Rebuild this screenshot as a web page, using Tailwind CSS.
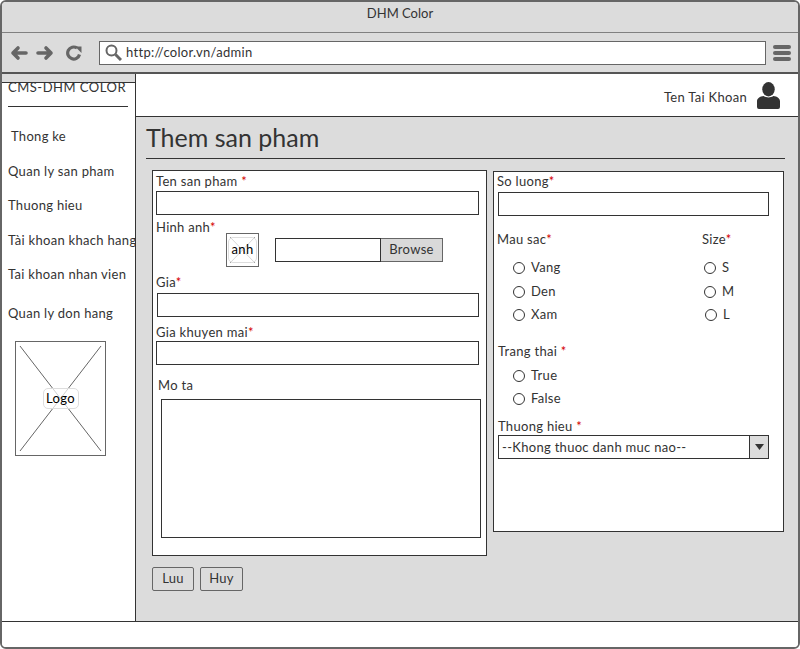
<!DOCTYPE html>
<html lang="en">
<head>
    <meta charset="UTF-8">
    <title>DHM Color</title>
    <script src="https://cdn.jsdelivr.net/npm/@tailwindcss/browser@4"></script>
</head>
<body class="bg-white">
    <div class="w-[800px] h-[649px] overflow-hidden flex flex-col bg-white border-2 border-[#666] rounded-[6px] font-['Lato',sans-serif] text-[13px] tracking-[0.3px] text-[#333]">
        <!-- title bar -->
        <div class="h-[31px] shrink-0 bg-[#dcdcdc] border-b border-[#808080] flex justify-center pt-[2px] leading-[18px] tracking-normal">DHM Color</div>
        <!-- address bar -->
        <div class="h-[41px] shrink-0 bg-[#dcdcdc] border-b-2 border-[#555] flex items-center pl-[8px] pr-[7px]">
            <svg class="w-[18px] h-[16px]" viewBox="0 0 18 16" fill="none" stroke="#666" stroke-width="3.6" stroke-linecap="round" stroke-linejoin="round"><path d="M16 8H3M8 3L3 8l5 5"/></svg>
            <svg class="w-[18px] h-[16px] ml-[8px]" viewBox="0 0 18 16" fill="none" stroke="#666" stroke-width="3.6" stroke-linecap="round" stroke-linejoin="round"><path d="M2 8h13M10 3l5 5-5 5"/></svg>
            <svg class="w-[16px] h-[16px] ml-[12px]" viewBox="0 0 16 16" fill="none"><path d="M13.500 9.500A6 6 0 1 1 11 3" stroke="#666" stroke-width="3.200"/><path d="M9 1.500h6.500V8z" fill="#666"/></svg>
            <div class="ml-[17px] w-[667px] h-[24px] bg-white border border-[#666] flex items-center pl-[5px]">
                <svg class="w-[17px] h-[17px] shrink-0" viewBox="0 0 17 17" fill="none" stroke="#666"><circle cx="6.500" cy="6.500" r="5" stroke-width="2"/><path d="M10.500 10.500L16 16" stroke-width="3"/></svg>
                <span class="ml-[4px]">http://color.vn/admin</span>
            </div>
            <div class="ml-[7px] w-[18px] flex flex-col gap-[2px]">
                <div class="h-[4px] rounded-sm bg-[#666]"></div>
                <div class="h-[4px] rounded-sm bg-[#666]"></div>
                <div class="h-[4px] rounded-sm bg-[#666]"></div>
            </div>
        </div>
        <div class="flex-1 min-h-0 flex -ml-px">
            <!-- sidebar -->
            <div class="w-[135px] shrink-0 bg-white border-x border-[#333] overflow-hidden">
                <div class="h-[9px] bg-[#dcdcdc] border-b border-[#333]"></div>
                <div class="h-[15px] overflow-hidden pl-[6px] whitespace-nowrap tracking-[0.5px]">
                    <div class="-mt-[5px] leading-[18px]">CMS-DHM COLOR</div>
                </div>
                <div class="ml-[6px] w-[120px] border-t border-[#333] mt-[8px]"></div>
                <div class="pl-[9px] mt-[20px] leading-[18px] whitespace-nowrap">Thong ke</div>
                <div class="pl-[6px] mt-[17px] leading-[18px] whitespace-nowrap">Quan ly san pham</div>
                <div class="pl-[6px] mt-[16px] leading-[18px] whitespace-nowrap">Thuong hieu</div>
                <div class="pl-[6px] mt-[17px] leading-[18px] whitespace-nowrap">Tài khoan khach hang</div>
                <div class="pl-[6px] mt-[16px] leading-[18px] whitespace-nowrap">Tai khoan nhan vien</div>
                <div class="pl-[6px] mt-[21px] leading-[18px] whitespace-nowrap">Quan ly don hang</div>
                <div class="relative ml-[13px] mt-[19px] w-[91px] h-[115px] border border-[#666] flex items-center justify-center">
                    <svg class="absolute inset-0 w-full h-full" viewBox="0 0 89 113" fill="none" stroke="#666"><path d="M4 4l81 105M85 4L4 109"/></svg>
                    <div class="relative w-[36px] h-[21px] rounded-[5px] bg-white/70 border border-[#ddd] text-black flex items-center justify-center">Logo</div>
                </div>
            </div>
            <!-- main -->
            <div class="flex-1 min-w-0 bg-[#dcdcdc] flex flex-col">
                <div class="h-[43px] shrink-0 bg-white border-b border-[#333] flex items-center justify-end pr-[18px]">
                    <span class="mt-[6px]">Ten Tai Khoan</span>
                    <svg class="ml-[10px] w-[23px] h-[27px]" viewBox="0 0 24 28" fill="#333"><ellipse cx="12" cy="7.500" rx="6.500" ry="7.500"/><path d="M2 28a2 2 0 0 1-2-2v-6c0-3 3-5 7-5.500 3 2 7 2 10 0 4 .5 7 2.500 7 5.500v6a2 2 0 0 1-2 2z"/></svg>
                </div>
                <div class="ml-[10px] mr-[13px] h-[42px] border-b border-[#333] text-[25px] leading-[40px] tracking-normal">Them san pham</div>
                <div class="flex items-start ml-[16px] mt-[11px]">
                    <!-- left form -->
                    <div class="w-[335px] h-[386px] bg-white border border-[#333] pl-[3px]">
                        <div class="h-[20px] leading-[20px]">Ten san pham <span class="text-[#d40000]">*</span></div>
                        <div class="h-[24px] w-[323px] border border-[#333]"></div>
                        <div class="mt-[2px] h-[20px] leading-[20px]">Hinh anh<span class="text-[#d40000]">*</span></div>
                        <div class="flex items-center -mt-[4px] h-[34px]">
                            <div class="relative ml-[70px] w-[33px] h-[34px] border border-[#666] flex items-center justify-center">
                                <svg class="absolute inset-0 w-full h-full" viewBox="0 0 31 32" fill="none" stroke="#999"><path d="M3 3l25 26M28 3L3 29"/></svg>
                                <div class="relative w-[29px] h-[26px] rounded-[5px] bg-white/60 border border-[#ddd] text-black flex items-center justify-center">anh</div>
                            </div>
                            <div class="ml-[16px] w-[106px] h-[24px] border border-[#333]"></div>
                            <div class="w-[62px] h-[24px] bg-[#d9d9d9] border border-[#666] border-l-0 flex items-center justify-center">Browse</div>
                        </div>
                        <div class="mt-[5px] h-[20px] leading-[20px]">Gia<span class="text-[#d40000]">*</span></div>
                        <div class="mt-[1px] ml-[1px] h-[24px] w-[322px] border border-[#333]"></div>
                        <div class="mt-[5px] h-[20px] leading-[20px]">Gia khuyen mai<span class="text-[#d40000]">*</span></div>
                        <div class="h-[24px] w-[323px] border border-[#333] -mt-[1px]"></div>
                        <div class="mt-[10px] ml-[2px] h-[20px] leading-[20px]">Mo ta</div>
                        <div class="mt-[4px] ml-[5px] h-[139px] w-[320px] border border-[#333]"></div>
                    </div>
                    <!-- right form -->
                    <div class="ml-[6px] mt-[1px] w-[291px] h-[361px] bg-white border border-[#333] pl-[3px]">
                        <div class="h-[20px] leading-[18px]">So luong<span class="text-[#d40000]">*</span></div>
                        <div class="ml-[1px] h-[24px] w-[271px] border border-[#333]"></div>
                        <div class="flex mt-[13px] h-[20px] leading-[20px]">
                            <div class="w-[205px]">Mau sac<span class="text-[#d40000]">*</span></div>
                            <div>Size<span class="text-[#d40000]">*</span></div>
                        </div>
                        <div class="flex mt-[9px]">
                            <div class="w-[190px] flex flex-col gap-[3.500px] pl-[16px]">
                                <label class="h-[20px] flex items-center gap-[6px]"><span class="w-[12px] h-[12px] rounded-full border border-[#333]"></span>Vang</label>
                                <label class="h-[20px] flex items-center gap-[6px]"><span class="w-[12px] h-[12px] rounded-full border border-[#333]"></span>Den</label>
                                <label class="h-[20px] flex items-center gap-[6px]"><span class="w-[12px] h-[12px] rounded-full border border-[#333]"></span>Xam</label>
                            </div>
                            <div class="flex flex-col gap-[3.500px] pl-[17px]">
                                <label class="h-[20px] flex items-center gap-[6px]"><span class="w-[12px] h-[12px] rounded-full border border-[#333]"></span>S</label>
                                <label class="h-[20px] flex items-center gap-[6px]"><span class="w-[12px] h-[12px] rounded-full border border-[#333]"></span>M</label>
                                <label class="h-[20px] flex items-center gap-[6px] ml-[1px]"><span class="w-[12px] h-[12px] rounded-full border border-[#333]"></span>L</label>
                            </div>
                        </div>
                        <div class="mt-[16px] ml-[1px] h-[20px] leading-[20px]">Trang thai <span class="text-[#d40000]">*</span></div>
                        <div class="flex flex-col gap-[3px] pl-[16px] mt-[5px]">
                            <label class="h-[20px] flex items-center gap-[6px]"><span class="w-[12px] h-[12px] rounded-full border border-[#333]"></span>True</label>
                            <label class="h-[20px] flex items-center gap-[6px]"><span class="w-[12px] h-[12px] rounded-full border border-[#333]"></span>False</label>
                        </div>
                        <div class="mt-[7px] ml-[1px] h-[20px] leading-[20px]">Thuong hieu <span class="text-[#d40000]">*</span></div>
                        <div class="ml-[1px] -mt-[1px] h-[24px] w-[271px] border border-[#333] flex">
                            <div class="flex-1 pl-[3px] leading-[22px]">--Khong thuoc danh muc nao--</div>
                            <div class="w-[19px] bg-[#dcdcdc] border-l border-[#333] flex items-center justify-center">
                                <svg class="w-[9px] h-[6px]" viewBox="0 0 9 6" fill="#333"><path d="M0 0h9L4.500 6z"/></svg>
                            </div>
                        </div>
                    </div>
                </div>
                <div class="flex gap-[6px] ml-[16px] mt-[11px]">
                    <button class="w-[42px] h-[24px] border border-[#666] rounded-[2px]">Luu</button>
                    <button class="w-[43px] h-[24px] border border-[#666] rounded-[2px]">Huy</button>
                </div>
            </div>
        </div>
        <!-- status bar -->
        <div class="h-[26px] shrink-0 bg-white border-t border-[#333]"></div>
    </div>
</body>
</html>
